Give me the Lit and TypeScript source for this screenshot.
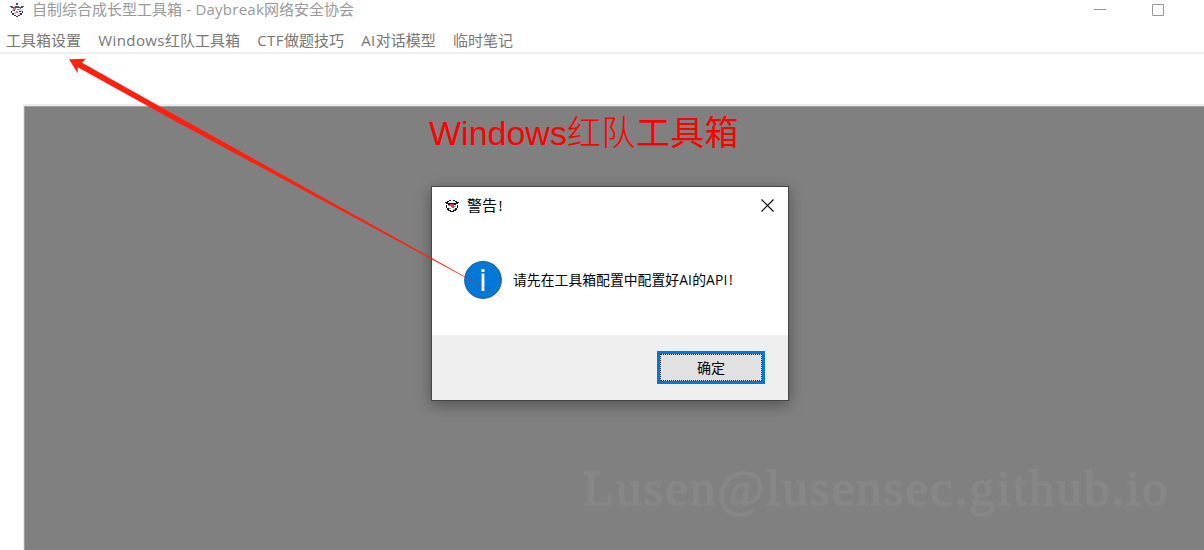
import { LitElement, html, css } from "lit";
import { customElement } from "lit/decorators.js";

const mascot = html`<svg class="mascot" viewBox="0 0 16 16" aria-hidden="true">
  <path fill="#fff" stroke="#d5d6e0" stroke-width=".5" d="M4 4h8l2 3-1 4-3 3H6l-3-3-1-4z" />
  <path fill="#50505c" d="M7 1h2v2H7zM1 4h3v1h2V4h4v1h2V4h3v1h-1v1h-2v1h-1V6H5v1H4V6H2V5H1z" />
  <path fill="#c3c5d8" d="M3 7h3v2H3zM10 8h3v2h-3zM5 10h2v2H5zM9 11h2v1H9z" />
  <path fill="#ee6a74" d="M5 6h2v2H5zM8 7h3v1H8zM7 9h2v2H7z" />
  <path fill="#3c3c50" d="M4 8h2v1H4zM10 9h2v1h-2zM2 9h1v2H2zM13 9h1v2h-1zM3 11h2v2H3zM11 11h2v2h-2zM5 13h2v1H5zM9 13h2v1H9zM7 14h2v1H7z" />
</svg>`;

const badge = html`<svg class="mascot" viewBox="0 0 14 14" aria-hidden="true">
  <path fill="#fff" d="M3 1h8v2h2v7h-2v2H9v1H5v-1H3v-2H1V3h2z" />
  <path fill="#171722" d="M4 1h2v1H4zM8 1h2v1H8zM2 2h2v1H2zM10 2h2v1h-2zM0 3h3v1h8V3h3v1h-1v1h-2v1H9V5H5v1H3V5H1V4H0zM1 6h1v3H1zM12 6h1v3h-1zM2 9h2v2H2zM10 9h2v2h-2zM3 11h3v1H3zM8 11h3v1H8zM5 12h4v1H5z" />
  <path fill="#e43b46" d="M5 5h4v1H5zM5 6h4v1H5zM6 7h3v1H6zM7 8h2v1H7z" />
  <path fill="#8f98c4" d="M3 6h2v1H3zM9 7h2v1H9zM4 9h2v1H4zM8 10h2v1H8z" />
</svg>`;

@customElement("warning-dialog")
export class WarningDialog extends LitElement {
  static styles = css`
    :host {
      display: flex;
      flex-direction: column;
      box-sizing: border-box;
      width: 358px;
      height: 215px;
      border: 1px solid #454545;
      background: #fff;
      box-shadow: 0 4px 14px rgba(0, 0, 0, 0.36);
      color: #000;
      font-family: "Open Sans", "Noto Sans CJK SC", sans-serif;
    }
    .caption {
      display: flex;
      align-items: center;
      height: 37px;
      padding: 0 14px 0 13px;
      font-size: 15px;
      line-height: 20px;
    }
    .mascot { width: 14px; height: 14px; margin-right: 8px; }
    .name { flex: 1; margin-top: -2px; }
    .bang { margin-left: 1.5px; }
    .close { width: 13px; height: 13px; }
    .body {
      flex: 1;
      display: flex;
      align-items: center;
      padding: 1px 32px 0;
      gap: 11px;
      font-size: 13.85px;
      white-space: nowrap;
    }
    .info { width: 38px; height: 38px; flex: none; }
    .message { padding-bottom: 2px; }
    .latin { letter-spacing: 0.2px; }
    .footer {
      display: flex;
      justify-content: flex-end;
      height: 65px;
      box-sizing: border-box;
      padding: 16px 23px 0 0;
      background: #efefef;
    }
    .ok {
      width: 108px;
      height: 33px;
      padding: 0 0 1px;
      border: 3px solid #0078d7;
      background: #e1e1e1;
      outline: 1px dotted #222;
      outline-offset: -4px;
      border-radius: 0;
      color: #000;
      font: 14px "Noto Sans CJK SC", sans-serif;
    }
  `;

  render() {
    return html`
      <div class="caption">
        ${badge}<span class="name">警告<span class="bang">!</span></span>
        <svg class="close" viewBox="0 0 13 13"><path d="M.5.5l12 12M12.500.5l-12 12" stroke="#000" stroke-width="1.1" /></svg>
      </div>
      <div class="body">
        <svg class="info" viewBox="0 0 38 38">
          <circle cx="19" cy="19" r="18.3" fill="#0078d7" stroke="#25659e" stroke-width="1.2" />
          <path d="M17.600 12.500h2.800V30h-2.800zM17.500 8h3v3h-3z" fill="#fff" />
        </svg>
        <span class="message">请先在工具箱配置中配置好<span class="latin">AI</span>的<span class="latin">API</span><span class="bang">!</span></span>
      </div>
      <div class="footer"><button class="ok">确定</button></div>
    `;
  }
}

@customElement("app-root")
export class AppRoot extends LitElement {
  static styles = css`
    :host {
      display: flex;
      flex-direction: column;
      position: relative;
      width: 1204px;
      height: 550px;
      overflow: hidden;
      background: #fff;
      font-family: "Open Sans", "Noto Sans CJK SC", sans-serif;
    }
    .titlebar {
      display: flex;
      align-items: center;
      height: 20px;
      padding: 0 40px 0 9px;
      font-size: 15px;
      line-height: 20px;
      color: #999;
      white-space: nowrap;
    }
    .mascot { width: 16px; height: 16px; margin: -1px 7px 0 0; }
    .name { flex: 1; margin-top: -2px; }
    .name .latin { letter-spacing: 0.25px; }
    .controls { display: flex; gap: 46px; }
    .controls svg { width: 12px; height: 12px; }
    .menu {
      display: flex;
      gap: 17.3px;
      height: 32px;
      box-sizing: border-box;
      padding: 9px 0 0 6px;
      font-size: 15px;
      line-height: 22px;
      color: #777;
      white-space: nowrap;
    }
    .menu .latin { letter-spacing: 0.4px; }
    .rule { height: 2px; background: #f0f0f0; }
    .panel {
      flex: 1;
      margin: 50px 0 0 23px;
      border-top: 2px solid #ededed;
      border-left: 1px solid #ededed;
      background: #808080;
      box-shadow: inset 1px 1px #a0a0a0;
    }
    .heading {
      margin: 0;
      padding: 6px 0 0 405px;
      color: #f00;
      font: 400 34px/42px "Liberation Sans", "Noto Sans CJK SC", sans-serif;
      white-space: nowrap;
    }
    .thin { font-weight: 300; letter-spacing: 0.5px; }
    .wide { letter-spacing: 0.3px; }
    .watermark {
      position: absolute;
      left: 583px;
      top: 459px;
      font: 51px/58px "Liberation Serif", serif;
      letter-spacing: 1.95px;
      color: #878787;
      -webkit-text-stroke: 1.4px #878787;
      white-space: nowrap;
    }
    warning-dialog { position: absolute; left: 431px; top: 186px; }
    .arrow { position: absolute; left: 0; top: 0; width: 520px; height: 310px; pointer-events: none; }
  `;

  private menus = [
    ["", "工具箱设置"],
    ["Windows", "红队工具箱"],
    ["CTF", "做题技巧"],
    ["AI", "对话模型"],
    ["", "临时笔记"],
  ];

  render() {
    return html`
      <div class="titlebar">
        ${mascot}
        <span class="name">自制综合成长型工具箱<span class="latin"> - Daybreak</span>网络安全协会</span>
        <div class="controls">
          <svg viewBox="0 0 12 12"><path d="M0 5.500h12" stroke="#999" /></svg>
          <svg viewBox="0 0 12 12"><path d="M.5.5h11v11H.5z" stroke="#999" fill="none" /></svg>
        </div>
      </div>
      <nav class="menu">
        ${this.menus.map(([latin, han]) => html`<span><span class="latin">${latin}</span>${han}</span>`)}
      </nav>
      <div class="rule"></div>
      <main class="panel">
        <h1 class="heading">Windows<span class="thin">红队</span><span class="wide">工具箱</span></h1>
      </main>
      <div class="watermark">Lusen@lusensec.github.io</div>
      <warning-dialog></warning-dialog>
      <svg class="arrow" viewBox="0 0 520 310">
        <defs>
          <linearGradient id="fade" gradientUnits="userSpaceOnUse" x1="465" y1="277" x2="504" y2="299">
            <stop offset="0" stop-color="#ff2010" stop-opacity="0.7" />
            <stop offset="1" stop-color="#ff2010" stop-opacity="0.15" />
          </linearGradient>
        </defs>
        <path fill="#ff2010" d="M69 59.300L85.700 58.700L82 62.700L184 120L465.300 276.700L464.900 277.200L173 120L77.700 67.300L77.700 73.300Z" />
        <path d="M465 277L504 299" stroke="url(#fade)" stroke-width="0.7" />
      </svg>
    `;
  }
}
